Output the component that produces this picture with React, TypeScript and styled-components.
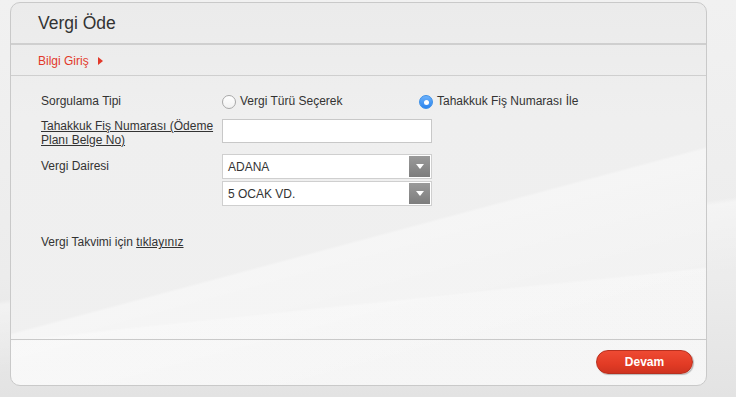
import React, { useState } from "react";
import styled, { createGlobalStyle } from "styled-components";

const GlobalStyle = createGlobalStyle`
  html, body {
    margin: 0;
    padding: 0;
  }
  body {
    width: 736px;
    height: 397px;
    overflow: hidden;
    font-family: "Liberation Sans", Arial, sans-serif;
    background:
      linear-gradient(172deg, rgba(255,255,255,0) 60%, rgba(255,255,255,0.4) 61%, rgba(255,255,255,0) 75%),
      linear-gradient(180deg, #f1f1f1 0%, #ececec 70%, #e3e3e3 100%);
  }
`;

const Page = styled.div`
  padding: 2px 0 0 10px;
`;

const Panel = styled.section`
  width: 695px;
  height: 382px;
  border: 1px solid #c9c9c9;
  border-radius: 10px;
  display: flex;
  flex-direction: column;
  overflow: hidden;
  background:
    linear-gradient(165deg, rgba(255,255,255,0) 58%, rgba(255,255,255,0.4) 58.5%, rgba(255,255,255,0.15) 80%),
    linear-gradient(174deg, rgba(255,255,255,0) 74%, rgba(255,255,255,0.3) 74.5%),
    linear-gradient(180deg, #ebebeb 0%, #efefef 30%, #f0f0f0 100%);
`;

const Header = styled.header`
  height: 42px;
  box-sizing: border-box;
  border-bottom: 2px solid #cfcfcf;
  display: flex;
  align-items: center;
  padding-left: 27px;
  padding-top: 1px;
`;

const Title = styled.h1`
  margin: 0;
  font-size: 17.5px;
  font-weight: normal;
  color: #333;
`;

const StepBar = styled.div`
  height: 31px;
  box-sizing: border-box;
  border-bottom: 1px solid #cfcfcf;
  display: flex;
  align-items: center;
  gap: 9px;
  padding-left: 27px;
  padding-top: 1px;
`;

const StepLabel = styled.span`
  font-size: 12px;
  color: #e2392a;
`;

const Arrow = styled.span`
  width: 0;
  height: 0;
  border-top: 4px solid transparent;
  border-bottom: 4px solid transparent;
  border-left: 5px solid #e2392a;
`;

const Form = styled.div`
  flex: 1;
  padding: 17px 0 0 30px;
  display: flex;
  flex-direction: column;
`;

const Row = styled.div<{ $mt?: number }>`
  display: grid;
  grid-template-columns: 181px 1fr;
  margin-top: ${(p) => p.$mt ?? 0}px;
  align-items: start;
`;

const Label = styled.div<{ $underline?: boolean; $pt?: number }>`
  font-size: 12px;
  line-height: 14px;
  color: #333;
  padding-top: ${(p) => p.$pt ?? 0}px;
  text-decoration: ${(p) => (p.$underline ? "underline" : "none")};
  text-underline-offset: 1px;
`;

const RadioGroup = styled.div`
  display: flex;
  align-items: center;
`;

const RadioOption = styled.label<{ $width?: number }>`
  display: flex;
  align-items: center;
  gap: 4px;
  font-size: 12px;
  color: #333;
  width: ${(p) => (p.$width ? `${p.$width}px` : "auto")};
  cursor: pointer;
`;

const RadioDot = styled.span<{ $checked: boolean }>`
  width: 14px;
  height: 14px;
  box-sizing: border-box;
  border-radius: 50%;
  margin-top: 2px;
  display: flex;
  align-items: center;
  justify-content: center;
  border: 1px solid ${(p) => (p.$checked ? "#3b8fe8" : "#a8a8a8")};
  background: ${(p) =>
    p.$checked
      ? "linear-gradient(180deg, #6cb1fb, #2b84ee)"
      : "linear-gradient(180deg, #ffffff, #f1f1f1)"};
  &::after {
    content: "";
    width: 5px;
    height: 5px;
    border-radius: 50%;
    background: #fff;
    display: ${(p) => (p.$checked ? "block" : "none")};
  }
`;

const TextInput = styled.input`
  width: 210px;
  height: 24px;
  box-sizing: border-box;
  border: 1px solid #c8c8c8;
  background: #fff;
  font-family: inherit;
  font-size: 12px;
  padding: 0 5px;
  outline: none;
`;

const Selects = styled.div`
  display: flex;
  flex-direction: column;
  gap: 2px;
`;

const SelectBox = styled.div`
  width: 210px;
  height: 25px;
  box-sizing: border-box;
  border: 1px solid #cfcfcf;
  background: #fff;
  display: flex;
  align-items: center;
  justify-content: space-between;
  padding: 1px 1px 1px 5px;
  font-size: 12px;
  color: #333;
`;

const SelectButton = styled.span`
  width: 21px;
  height: 21px;
  background: linear-gradient(180deg, #9a9a9a 0%, #7d7d7d 100%);
  display: flex;
  align-items: center;
  justify-content: center;
  &::after {
    content: "";
    width: 0;
    height: 0;
    border-left: 4px solid transparent;
    border-right: 4px solid transparent;
    border-top: 5px solid #fff;
  }
`;

const Note = styled.div`
  margin-top: 29px;
  font-size: 12px;
  color: #333;
`;

const NoteLink = styled.a`
  color: #333;
  text-decoration: underline;
  text-underline-offset: 1px;
  cursor: pointer;
`;

const Footer = styled.footer`
  height: 46px;
  box-sizing: border-box;
  border-top: 1px solid #c9c9c9;
  display: flex;
  justify-content: flex-end;
  align-items: flex-start;
  padding: 10px 13px 0 0;
`;

const Button = styled.button`
  width: 97px;
  height: 24px;
  border-radius: 12px;
  border: 1px solid #b8301f;
  background: linear-gradient(180deg, #ee4a33 0%, #e23b25 60%, #cf3320 100%);
  box-shadow: 1px 1px 1px rgba(0, 0, 0, 0.25);
  color: #fff;
  font-family: inherit;
  font-weight: bold;
  font-size: 12px;
  cursor: pointer;
`;

const App: React.FC = () => {
  const [mode, setMode] = useState<"tur" | "fis">("fis");

  return (
    <>
      <GlobalStyle />
      <Page>
        <Panel>
          <Header>
            <Title>Vergi Öde</Title>
          </Header>
          <StepBar>
            <StepLabel>Bilgi Giriş</StepLabel>
            <Arrow />
          </StepBar>
          <Form>
            <Row>
              <Label $pt={1}>Sorgulama Tipi</Label>
              <RadioGroup>
                <RadioOption $width={197} onClick={() => setMode("tur")}>
                  <RadioDot $checked={mode === "tur"} />
                  Vergi Türü Seçerek
                </RadioOption>
                <RadioOption onClick={() => setMode("fis")}>
                  <RadioDot $checked={mode === "fis"} />
                  Tahakkuk Fiş Numarası İle
                </RadioOption>
              </RadioGroup>
            </Row>
            <Row $mt={10}>
              <Label $underline>
                Tahakkuk Fiş Numarası (Ödeme
                <br />
                Planı Belge No)
              </Label>
              <TextInput />
            </Row>
            <Row $mt={7}>
              <Label $pt={5}>Vergi Dairesi</Label>
              <Selects>
                <SelectBox>
                  ADANA
                  <SelectButton />
                </SelectBox>
                <SelectBox>
                  5 OCAK VD.
                  <SelectButton />
                </SelectBox>
              </Selects>
            </Row>
            <Note>
              Vergi Takvimi için <NoteLink>tıklayınız</NoteLink>
            </Note>
          </Form>
          <Footer>
            <Button>Devam</Button>
          </Footer>
        </Panel>
      </Page>
    </>
  );
};

export default App;
